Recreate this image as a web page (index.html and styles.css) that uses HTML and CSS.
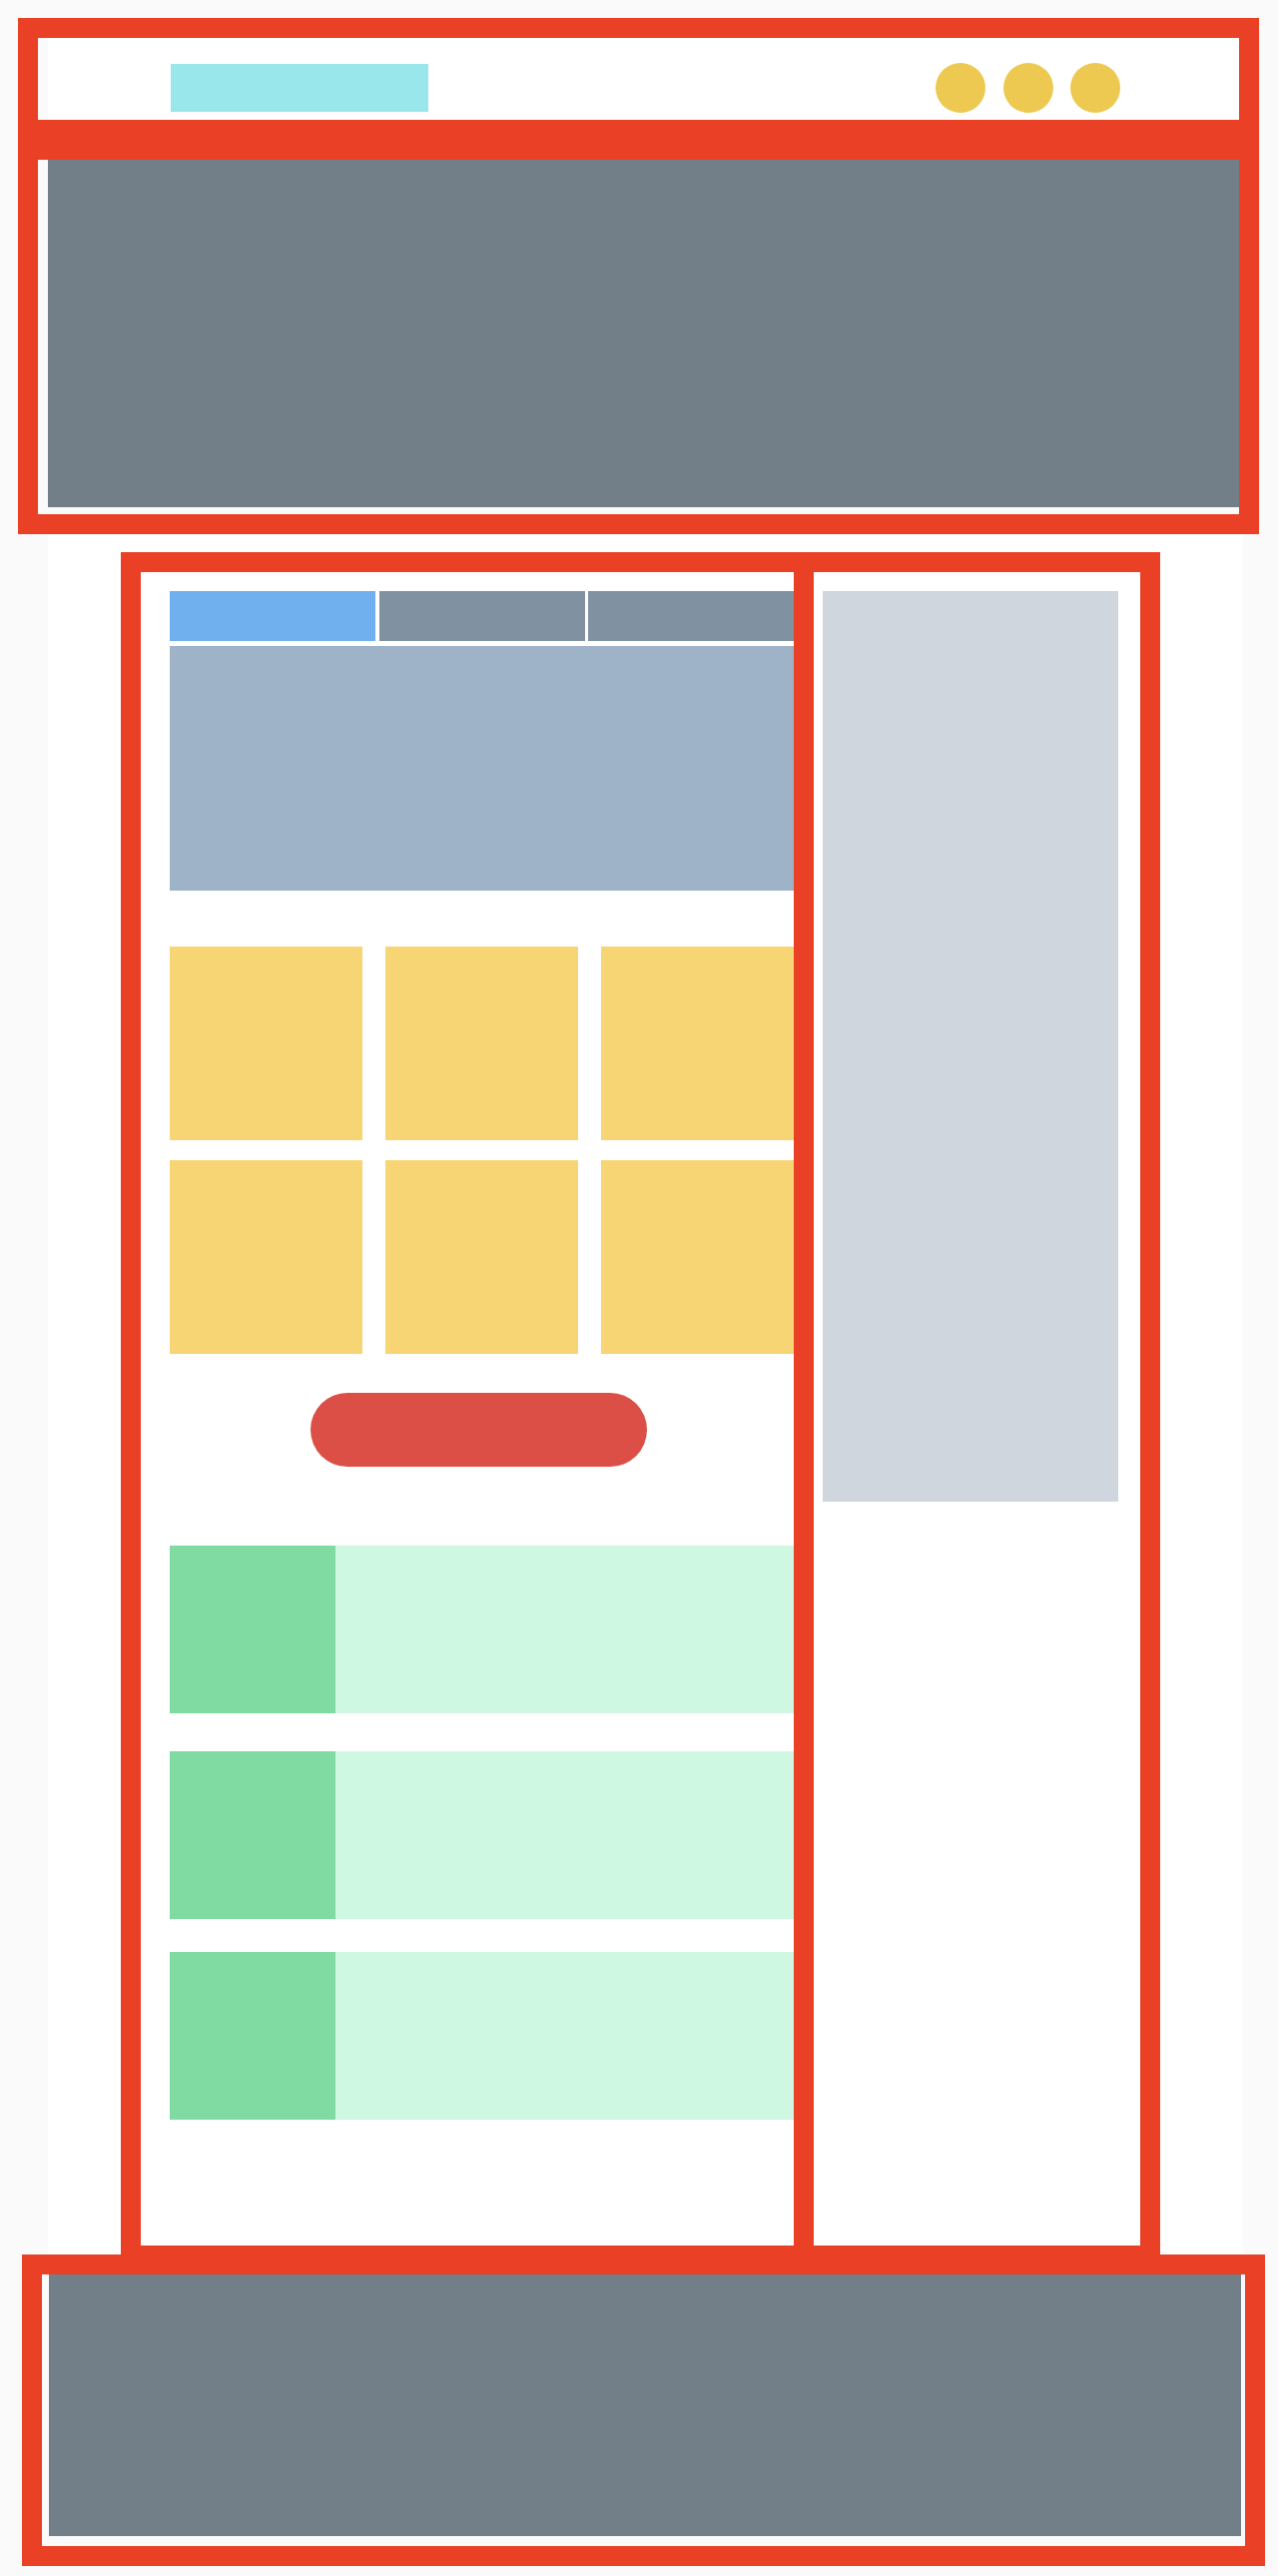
FILE: index.html
```html
<!DOCTYPE html>
<html>
  <head>
    <title>Layout</title>
    <link rel="stylesheet" href="styles.css">
  </head>
  <body>
    <div class="shell">
      <div class="header">
        <div class="logo"></div>
        <div class="dots">
          <span class="dot"></span>
          <span class="dot"></span>
          <span class="dot"></span>
        </div>
      </div>
      <div class="band"></div>
      <div class="hero"></div>
    </div>

    <div class="page">
      <div class="frame">
        <div class="content">
          <div class="tabs">
            <div class="tab active"></div>
            <div class="tab"></div>
            <div class="tab"></div>
          </div>
          <div class="panel"></div>

          <div class="tiles">
            <div class="tile"></div>
            <div class="tile"></div>
            <div class="tile"></div>
            <div class="tile"></div>
            <div class="tile"></div>
            <div class="tile"></div>
          </div>

          <div class="cta"></div>

          <div class="row first">
            <div class="thumb"></div>
            <div class="body"></div>
          </div>
          <div class="row second">
            <div class="thumb"></div>
            <div class="body"></div>
          </div>
          <div class="row third">
            <div class="thumb"></div>
            <div class="body"></div>
          </div>
        </div>
        <div class="sidebar">
          <div class="side-box"></div>
        </div>
      </div>
    </div>

    <div class="footer">
      <div class="footer-box"></div>
    </div>
  </body>
</html>
```

FILE: styles.css
```css
html,
body {
  margin: 0;
  padding: 0;
}

body {
  background-color: #fafafa;
  padding-bottom: 10px;
}

/* top block: header + hero */
.shell {
  width: 1203px;
  margin: 18px 0 0 18px;
  border: 20px solid #e94026;
  padding-bottom: 7px;
}

.header {
  display: flex;
  justify-content: space-between;
  align-items: flex-start;
  height: 82px;
  margin-left: 10px;
  padding: 25px 119px 0 123px;
  box-sizing: border-box;
  background-color: #ffffff;
}

.logo {
  width: 258px;
  height: 48px;
  margin-top: 1px;
  background-color: #99e6eb;
}

.dots {
  display: flex;
  gap: 17.5px;
}

.dot {
  display: block;
  width: 50px;
  height: 50px;
  border-radius: 50%;
  background-color: #edc951;
}

.band {
  height: 40px;
  background-color: #e94026;
}

.hero {
  height: 348px;
  margin-left: 10px;
  background-color: #737f88;
}

/* middle white page */
.page {
  width: 1197px;
  margin-left: 48px;
  padding: 18px 0 0 73px;
  box-sizing: border-box;
  background-color: #ffffff;
}

.frame {
  display: flex;
  width: 1001px;
  height: 1676px;
  border: 20px solid #e94026;
}

.content {
  width: 625px;
  padding: 19px 0 0 29px;
}

.tabs {
  display: grid;
  grid-template-columns: repeat(3, 1fr);
  column-gap: 3.5px;
}

.tab {
  height: 50px;
  background-color: #8092a2;
}

.tab.active {
  background-color: #70b0ef;
}

.panel {
  height: 245px;
  margin-top: 5px;
  background-color: #9fb3c8;
}

.tiles {
  display: grid;
  grid-template-columns: repeat(3, 193px);
  gap: 20px 23px;
  margin-top: 56px;
}

.tile {
  height: 194px;
  background-color: #f7d574;
}

.cta {
  width: 337px;
  height: 74px;
  margin: 39px 0 0 141px;
  border-radius: 999px;
  background-color: #dc4f47;
}

.row {
  display: flex;
  height: 168px;
}

.row.first {
  margin-top: 79px;
}

.row.second {
  margin-top: 38px;
}

.row.third {
  margin-top: 33px;
}

.thumb {
  width: 166px;
  background-color: #80dba2;
}

.row .body {
  flex: 1;
  background-color: #cef8e2;
}

.sidebar {
  width: 296px;
  border-left: 20px solid #e94026;
  padding: 19px 22px 0 9px;
}

.side-box {
  height: 912px;
  background-color: #cfd6de;
}

/* bottom block */
.footer {
  width: 1245px;
  margin: -11px 0 0 22px;
  border: 20px solid #e94026;
  padding: 0 4px 10px 7px;
  box-sizing: border-box;
  background-color: #fafafa;
}

.footer-box {
  height: 262px;
  background-color: #737f88;
}
```
